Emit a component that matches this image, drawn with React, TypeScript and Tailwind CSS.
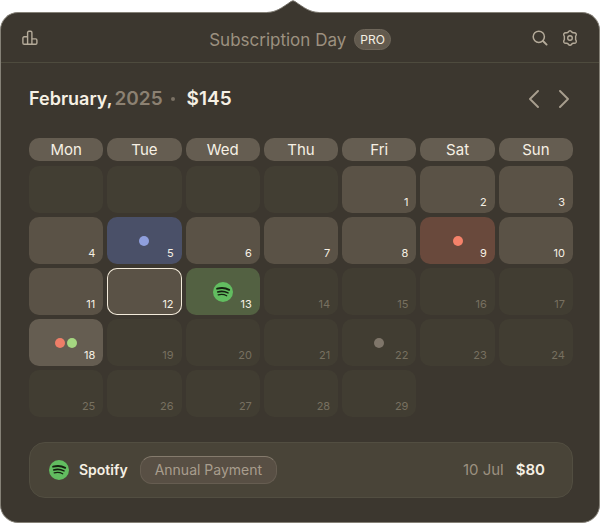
import React, { useState } from "react";
import clsx from "clsx";

type Day = {
  label?: number;
  tone: "empty" | "past" | "future" | "blue" | "red" | "green" | "light";
  dots?: string[];
  spotify?: boolean;
};

const WEEKDAYS = ["Mon", "Tue", "Wed", "Thu", "Fri", "Sat", "Sun"];

const TONES = {
  empty: "bg-[#423e33]",
  past: "bg-[#5a5246] text-[#f6f0e4]",
  future: "bg-[#413d32] text-[#777060]",
  blue: "bg-[#4a5068] text-[#f6f0e4]",
  red: "bg-[#69493c] text-[#f6f0e4]",
  green: "bg-[#536142] text-[#f6f0e4]",
  light: "bg-[#655d51] text-[#f6f0e4]",
};

const SPECIAL_DAYS: Record<number, Omit<Day, "label">> = {
  5: { tone: "blue", dots: ["bg-[#8f9fdd]"] },
  9: { tone: "red", dots: ["bg-[#f5826a]"] },
  13: { tone: "green", spotify: true },
  18: { tone: "light", dots: ["bg-[#ee7e68]", "bg-[#a5d781]"] },
  22: { tone: "future", dots: ["bg-[#7f766a]"] },
};

const DAYS: Day[] = [
  ...Array.from({ length: 4 }, (): Day => ({ tone: "empty" })),
  ...Array.from({ length: 29 }, (_, i): Day => {
    const label = i + 1;
    return { label, tone: label <= 12 ? "past" : "future", ...SPECIAL_DAYS[label] };
  }),
];

const SpotifyIcon: React.FC = () => (
  <svg viewBox="0 0 20 20" className="size-5" aria-hidden="true">
    <circle cx="10" cy="10" r="10" fill="#62bd60" />
    <g fill="none" stroke="#14200f" strokeLinecap="round">
      <path d="M4.1 6.7c4.2-1.2 8.6-.8 12.1 1.1" strokeWidth="1.9" />
      <path d="M4.7 9.9c3.6-1 7.2-.6 10.3 1" strokeWidth="1.6" />
      <path d="M5.2 12.8c3-.8 6-.5 8.5.9" strokeWidth="1.3" />
    </g>
  </svg>
);

const ChartIcon: React.FC = () => (
  <svg viewBox="0 0 16 16" className="size-4" fill="none" stroke="currentColor" strokeWidth="1.4" aria-hidden="true">
    <path d="M5.6 14.2V2.6c0-.8.5-1.3 1.3-1.3h1.7c.8 0 1.3.5 1.3 1.3v11.6" />
    <path d="M5.6 6.8H2.2C1.4 6.8.9 7.3.9 8.1v4.8c0 .8.5 1.3 1.3 1.3h11.4c.8 0 1.3-.5 1.3-1.3v-2.7c0-.8-.5-1.3-1.3-1.3H9.9" />
  </svg>
);

const SearchIcon: React.FC = () => (
  <svg viewBox="0 0 16 16" className="size-4" fill="none" stroke="currentColor" strokeLinecap="round" aria-hidden="true">
    <circle cx="6.8" cy="6.8" r="5.6" strokeWidth="1.5" />
    <path d="m11 11 3.6 3.6" strokeWidth="1.9" />
  </svg>
);

const GearIcon: React.FC = () => (
  <svg viewBox="0 0 16 16" className="size-4" fill="none" stroke="currentColor" strokeWidth="1.4" strokeLinejoin="round" aria-hidden="true">
    <path d="M8 .8Q9 .8 9.8 2q.6.9 1.7.8 1.9-.2 2.6.9.6 1-.3 2.300-.6 1 0 2 0 0 0 0-.6 1 0 2 .9 1.300.3 2.300-.7 1.100-2.600.9-1.100-.1-1.700.8Q9 15.200 8 15.200T6.200 14q-.6-.9-1.700-.8-1.900.2-2.600-.9-.6-1 .3-2.300.6-1 0-2-.0 0 0 0 .6-1 0-2-.9-1.300-.3-2.300.7-1.100 2.600-.9 1.100.1 1.700-.8Q7 .8 8 .8Z" />
    <circle cx="8" cy="8" r="2.3" />
  </svg>
);

const Chevron: React.FC<{ direction: "left" | "right" }> = ({ direction }) => (
  <svg viewBox="0 0 12 18" className="h-[18px] w-3" fill="none" stroke="currentColor" strokeWidth="1.9" strokeLinecap="round" strokeLinejoin="round" aria-hidden="true">
    <path d={direction === "left" ? "M10 1 2 9l8 8" : "m2 1 8 8-8 8"} />
  </svg>
);

const DayCell: React.FC<{ day: Day; selected: boolean; onSelect: () => void }> = ({ day, selected, onSelect }) => {
  if (!day.label) {
    return <div className={clsx("h-[47px] rounded-[10px]", TONES.empty)} />;
  }

  return (
    <button
      type="button"
      onClick={onSelect}
      aria-pressed={selected}
      className={clsx(
        "relative flex h-[47px] items-center justify-center gap-0.5 rounded-[10px]",
        TONES[day.tone],
        selected && "ring-1 ring-[#f3ebdb] ring-inset"
      )}
    >
      {day.dots?.map((dot) => (
        <span key={dot} className={clsx("size-2.5 rounded-full", dot)} />
      ))}
      {day.spotify && <SpotifyIcon />}
      <span className="absolute right-2 bottom-1 text-[11px] leading-[14px]">{day.label}</span>
    </button>
  );
};

const App: React.FC = () => {
  const [selected, setSelected] = useState(12);

  return (
    <div className="font-['Inter',sans-serif] text-[#f6f0e4]">
      <div className="flex justify-center pr-3.5">
        <svg viewBox="0 0 52 14" className="relative -mb-0.5 h-3.5 w-[52px]" aria-hidden="true">
          <path d="M0 14v-1C9 12 14 8.500 24 1.500q2-1.500 4 0C38 8.500 43 12 52 13v1Z" fill="#3c372f" />
          <path d="M0 12.500C9 12 14 8.500 24 1.500q2-1.500 4 0C38 8.500 43 12 52 12.500" fill="none" stroke="#77736a" />
        </svg>
      </div>

      <main className="rounded-[18px] border border-[#858177] bg-[#3c372f]">
        <header className="flex h-[50px] items-center justify-between border-b border-[#4e4b3e] px-[21px] text-[#b5ab9a]">
          <div className="flex flex-1">
            <button type="button" aria-label="Statistics">
              <ChartIcon />
            </button>
          </div>
          <div className="flex items-center gap-2 pt-1">
            <h1 className="text-[17px] leading-5 text-[#9c9180]">Subscription Day</h1>
            <span className="rounded-full border border-[#6f675b] bg-[#625a4e] px-[5px] text-xs leading-[19px] text-[#f6f0e4]">
              PRO
            </span>
          </div>
          <div className="flex flex-1 justify-end gap-3.5">
            <button type="button" aria-label="Search">
              <SearchIcon />
            </button>
            <button type="button" aria-label="Settings">
              <GearIcon />
            </button>
          </div>
        </header>

        <div className="pt-6 pr-[26px] pb-6 pl-7">
          <div className="flex h-6 items-center justify-between">
            <h2 className="flex items-center text-lg leading-6 font-semibold">
              <span>February,</span>
              <span className="ml-0.5 text-[19px] text-[#8c8172]">2025</span>
              <span className="mx-2 size-1 rounded-full bg-[#7a7164]" />
              <span className="ml-1 text-[19px]">$145</span>
            </h2>
            <div className="flex gap-[18px] pr-[3px] text-[#a89e8e]">
              <button type="button" aria-label="Previous month">
                <Chevron direction="left" />
              </button>
              <button type="button" aria-label="Next month">
                <Chevron direction="right" />
              </button>
            </div>
          </div>

          <div className="mt-[27px] grid grid-cols-7 gap-1">
            {WEEKDAYS.map((name) => (
              <div key={name} className="mb-px rounded-[10px] bg-[#655d51] text-center text-[15px] leading-[23px]">
                {name}
              </div>
            ))}
            {DAYS.map((day, i) => (
              <DayCell
                key={i}
                day={day}
                selected={day.label === selected}
                onSelect={() => day.label && setSelected(day.label)}
              />
            ))}
          </div>

          <section className="mt-[25px] flex h-14 items-center rounded-2xl border border-[#524e41] bg-[#494438] px-[19px] text-[15px] leading-5">
            <SpotifyIcon />
            <span className="ml-2.5 text-sm font-semibold">Spotify</span>
            <span className="ml-3 rounded-xl border border-[#665d51] border-t-[#857b6d] bg-[#584f44] px-3.5 py-[3px] text-sm leading-5 text-[#a89d8d]">
              Annual Payment
            </span>
            <span className="ml-auto text-[#9c9180]">10 Jul</span>
            <span className="mr-2 ml-3 font-semibold">$80</span>
          </section>
        </div>
      </main>
    </div>
  );
};

export default App;
